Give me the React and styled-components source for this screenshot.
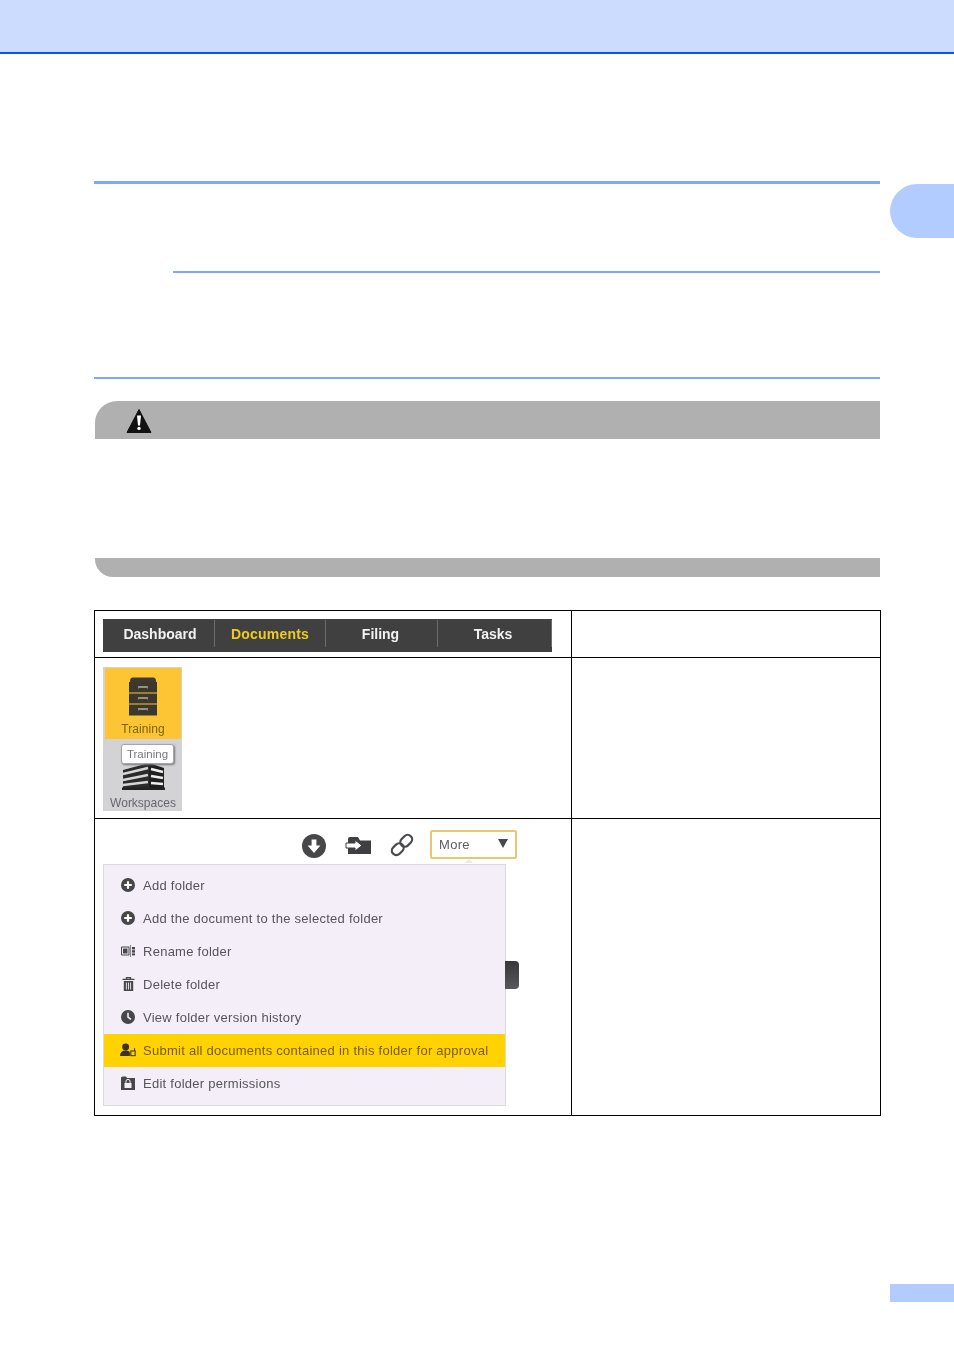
import React from "react";
import styled, { createGlobalStyle } from "styled-components";

const GlobalStyle = createGlobalStyle`
  html, body {
    margin: 0;
    padding: 0;
    background: #fff;
  }
`;

const Page = styled.div`
  width: 954px;
  height: 1348px;
  overflow: hidden;
`;

const TopBand = styled.header`
  height: 52px;
  background: #ccdcff;
  border-bottom: 2px solid #0a50f5;
`;

const Sheet = styled.div`
  display: grid;
  grid-template-columns: 787px 64px;
  column-gap: 9px;
  padding-left: 94px;
`;

const Main = styled.main`
  padding-top: 127px;
`;

const Aside = styled.aside`
  display: flex;
  flex-direction: column;
`;

const ChapterTab = styled.div`
  margin-top: 130px;
  height: 54px;
  background: #b3ccff;
  border-radius: 27px 0 0 27px;
`;

const PageTab = styled.div`
  margin-top: 1046px;
  height: 18px;
  background: #b3ccff;
`;

const Rule = styled.div`
  height: ${(p) => p.$weight}px;
  margin-top: ${(p) => p.$top}px;
  margin-left: ${(p) => p.$indent || 0}px;
  margin-right: 1px;
  background: #80a6f5;
`;

const WarningHead = styled.div`
  display: flex;
  align-items: center;
  box-sizing: border-box;
  height: 38px;
  margin: 22px 1px 0;
  padding: 2px 0 0 31px;
  background: #b0b0b0;
  border-top-left-radius: 22px;
`;

const WarningBody = styled.div`
  height: 119px;
`;

const WarningFoot = styled.div`
  height: 19px;
  margin: 0 1px;
  background: #b0b0b0;
  border-bottom-left-radius: 18px;
`;

const Table = styled.div`
  display: grid;
  grid-template-columns: 477px 1fr;
  grid-template-rows: 47px 161px 297px;
  margin-top: 33px;
  border-top: 1px solid #000;
  border-left: 1px solid #000;
  font-family: "Liberation Sans", sans-serif;
`;

const Cell = styled.div`
  position: relative;
  box-sizing: border-box;
  border-right: 1px solid #000;
  border-bottom: 1px solid #000;
  padding: ${(p) => p.$pad || "0"};
`;

const Nav = styled.nav`
  display: flex;
  width: 449px;
  height: 33px;
  background: #404040;
  filter: blur(0.3px);
`;

const NavItem = styled.div`
  display: flex;
  align-items: center;
  justify-content: center;
  box-sizing: border-box;
  width: ${(p) => p.$width}px;
  height: 27px;
  margin-top: 1px;
  padding: ${(p) => p.$pad || "0"};
  border-right: 1px solid #6c6c6c;
  font-size: 14px;
  font-weight: 700;
  letter-spacing: ${(p) => (p.$active ? "0.2px" : "0")};
  color: ${(p) => (p.$active ? "#f0cb1f" : "#f2f2f2")};
`;

const Tiles = styled.div`
  position: relative;
  box-sizing: border-box;
  width: 79px;
  height: 144px;
  padding: 1px 1px 0 2px;
  background: #d3d3d6;
  filter: blur(0.35px);
`;

const ActiveTile = styled.div`
  display: flex;
  flex-direction: column;
  align-items: center;
  height: 71px;
  padding-top: 9px;
  box-sizing: border-box;
  background: #fdc433;
`;

const PlainTile = styled.div`
  display: flex;
  flex-direction: column;
  align-items: center;
  padding-top: 23px;
`;

const TileLabel = styled.div`
  font-size: 12px;
  line-height: 14px;
  margin-top: 6px;
  color: ${(p) => p.$color};
  letter-spacing: ${(p) => p.$spacing}px;
`;

const Tooltip = styled.div`
  position: absolute;
  left: 18px;
  top: 77px;
  width: 53px;
  height: 20px;
  box-sizing: border-box;
  background: #fff;
  border: 1px solid #a5a5ad;
  border-radius: 3px;
  box-shadow: 1px 1px 2px #777;
  font-size: 11.5px;
  line-height: 18px;
  text-align: center;
  color: #77777d;
`;

const Toolbar = styled.div`
  display: flex;
  align-items: center;
  justify-content: flex-end;
  width: 414px;
  height: 29px;
  margin-bottom: 5px;
  filter: blur(0.3px);
`;

const ToolIcon = styled.div`
  display: flex;
  margin-top: ${(p) => p.$drop || 0}px;
  margin-right: ${(p) => p.$gap}px;
`;

const MoreButton = styled.div`
  position: relative;
  display: flex;
  align-items: center;
  justify-content: space-between;
  box-sizing: border-box;
  width: 87px;
  height: 29px;
  padding: 0 7px 0 7px;
  background: #fff;
  border: 2px solid #e8c76f;
  border-radius: 2px;
  font-size: 13px;
  letter-spacing: 0.3px;
  color: #5c5c66;

  &::after {
    content: "";
    position: absolute;
    left: 33px;
    bottom: -6px;
    border-left: 4px solid transparent;
    border-right: 4px solid transparent;
    border-bottom: 4px solid #ece6f0;
  }
`;

const Caret = styled.span`
  width: 0;
  height: 0;
  border-left: 5.5px solid transparent;
  border-right: 5.5px solid transparent;
  border-top: 9px solid #47474d;
  margin-top: -3px;
`;

const Menu = styled.div`
  box-sizing: border-box;
  width: 403px;
  height: 242px;
  padding-top: 4px;
  background: #f4eef8;
  border: 1px solid #dcdade;
  filter: blur(0.3px);
`;

const MenuItem = styled.div`
  display: flex;
  align-items: center;
  box-sizing: border-box;
  height: 33px;
  padding: 0 0 1px 16px;
  background: ${(p) => (p.$active ? "#ffd200" : "transparent")};
  color: ${(p) => (p.$active ? "#7b5c00" : "#555559")};
  font-size: 13px;
  letter-spacing: 0.26px;
  white-space: nowrap;
`;

const MenuIcon = styled.span`
  display: flex;
  justify-content: center;
  width: 16px;
  margin-right: 7px;
`;

const EdgeHandle = styled.div`
  position: absolute;
  left: 410px;
  top: 142px;
  width: 14px;
  height: 28px;
  background: linear-gradient(#38383b, #58585c);
  border-radius: 0 4px 4px 0;
`;

const WarningIcon = () => (
  <svg width="26" height="24" viewBox="0 0 26 24">
    <path d="M13 0.5 L25 23.5 L1 23.5 Z" fill="#111" stroke="#111" strokeLinejoin="round" />
    <path d="M11 6.5 h4 l-1 10 h-2 Z" fill="#fff" />
    <circle cx="13" cy="19.4" r="1.7" fill="#fff" />
  </svg>
);

const CabinetIcon = () => (
  <svg width="30" height="39" viewBox="0 0 30 39">
    <path d="M2 4 Q2 0.5 5 0.5 H25 Q28 0.5 28 4 V5 H2 Z" fill="#3d3a33" />
    <rect x="1" y="5" width="28" height="10.5" fill="#3a382f" />
    <rect x="1" y="16.5" width="28" height="10" fill="#3a382f" />
    <rect x="1" y="27.5" width="28" height="11" fill="#3a382f" />
    <path d="M10 10 h10 M10 21 h10 M10 32 h10" stroke="#bcae8c" strokeWidth="1.6" />
    <path d="M10.5 10 v1.6 M19.5 10 v1.6 M10.5 21 v1.6 M19.5 21 v1.6 M10.5 32 v1.6 M19.5 32 v1.6" stroke="#8f8468" />
  </svg>
);

const BuildingIcon = () => (
  <svg width="43" height="28" viewBox="0 0 43 28">
    <path d="M1 8 L27 1 V27 H1 Z" fill="#2b2b2b" />
    <path d="M27 1 L42 6 V27 H27 Z" fill="#1f1f1f" />
    <path d="M1 12 L26 6 M1 18 L26 13 M1 23 L26 20" stroke="#d6d6d6" strokeWidth="2.4" />
    <path d="M29 7 L41 10 M29 14 L41 16 M29 21 L41 22" stroke="#eee" strokeWidth="2.6" />
    <rect x="0" y="25.5" width="43" height="2.5" fill="#222" />
  </svg>
);

const DownloadIcon = () => (
  <svg width="24" height="24" viewBox="0 0 24 24">
    <circle cx="12" cy="12" r="12" fill="#47474a" />
    <path d="M9.6 5.5 h4.8 v6 h4 L12 19 5.6 11.5 h4 Z" fill="#fff" />
  </svg>
);

const MoveFolderIcon = () => (
  <svg width="27" height="19" viewBox="0 0 27 19">
    <path d="M3 3 Q3 1 5 1 H13 L15 4.5 H26 V18 H3 Z" fill="#3f3f42" />
    <path d="M1 7 H10 V4 L17 9.5 10 15 V12 H1 Z" fill="#fff" stroke="#3f3f42" strokeWidth="1" />
  </svg>
);

const ChainIcon = () => (
  <svg width="24" height="24" viewBox="0 0 24 24">
    <g transform="rotate(-45 12 12)" fill="none" stroke="#4a4a4e" strokeWidth="2.2">
      <rect x="-0.5" y="7.5" width="13" height="9" rx="4.5" />
      <rect x="11.5" y="7.5" width="13" height="9" rx="4.5" />
    </g>
  </svg>
);

const PlusCircle = () => (
  <svg width="14" height="14" viewBox="0 0 14 14">
    <circle cx="7" cy="7" r="7" fill="#47474a" />
    <path d="M3.2 7 H10.8 M7 3.2 V10.8" stroke="#fff" strokeWidth="2.2" />
  </svg>
);

const RenameIcon = () => (
  <svg width="14" height="12" viewBox="0 0 14 12">
    <path d="M0.5 2 H8 V10 H0.5 Z" fill="none" stroke="#47474a" />
    <rect x="2" y="3.5" width="4.5" height="5" fill="#47474a" />
    <path d="M9.5 0 V12" stroke="#8a8a8e" strokeWidth="1.2" />
    <rect x="11" y="2" width="3" height="2.4" fill="#47474a" />
    <rect x="11" y="5.2" width="3" height="2.4" fill="#47474a" />
    <rect x="11" y="8.4" width="3" height="2" fill="#47474a" />
  </svg>
);

const TrashIcon = () => (
  <svg width="13" height="14" viewBox="0 0 13 14">
    <path d="M0.5 2.4 H12.5 M4.5 2 V0.6 H8.5 V2" fill="none" stroke="#47474a" strokeWidth="1.3" />
    <path d="M1.8 4 H11.2 V14 H1.8 Z" fill="#47474a" />
    <path d="M4.4 5.5 V12.5 M6.5 5.5 V12.5 M8.6 5.5 V12.5" stroke="#f4eef8" strokeWidth="0.9" />
  </svg>
);

const ClockIcon = () => (
  <svg width="14" height="14" viewBox="0 0 14 14">
    <circle cx="7" cy="7" r="7" fill="#47474a" />
    <path d="M7 2.8 V7.2 L10 9.4" fill="none" stroke="#f4eef8" strokeWidth="1.6" />
  </svg>
);

const ApprovalIcon = () => (
  <svg width="17" height="14" viewBox="0 0 17 14">
    <circle cx="6" cy="3.7" r="3.7" fill="#3a3326" />
    <path d="M0 13.5 Q0 7.5 6 7.5 Q10 7.5 10.5 10 V13.5 Z" fill="#3a3326" />
    <rect x="11.5" y="8" width="4.6" height="5" fill="none" stroke="#3a3326" strokeWidth="1.1" />
    <path d="M15.5 5 V8" stroke="#3a3326" />
  </svg>
);

const LockFolderIcon = () => (
  <svg width="14" height="14" viewBox="0 0 14 14">
    <path d="M0 2 Q0 0.5 1.5 0.5 H5 L6 2 H14 V14 H0 Z" fill="#47474a" />
    <rect x="3.5" y="7" width="7" height="5" fill="#f4eef8" />
    <path d="M5 7 V5.2 Q5 3.4 7 3.4 Q9 3.4 9 5.2 V7" fill="none" stroke="#f4eef8" />
  </svg>
);

const navItems = [
  { label: "Dashboard", width: 112, pad: "0 0 0 3px" },
  { label: "Documents", width: 111 },
  { label: "Filing", width: 112, pad: "0 2px 0 0" },
  { label: "Tasks", width: 114, pad: "0 3px 0 0" },
];

const menuItems = [
  { label: "Add folder", icon: <PlusCircle /> },
  { label: "Add the document to the selected folder", icon: <PlusCircle /> },
  { label: "Rename folder", icon: <RenameIcon /> },
  { label: "Delete folder", icon: <TrashIcon /> },
  { label: "View folder version history", icon: <ClockIcon /> },
  {
    label: "Submit all documents contained in this folder for approval",
    icon: <ApprovalIcon />,
    active: true,
  },
  { label: "Edit folder permissions", icon: <LockFolderIcon /> },
];

const App = () => (
  <Page>
    <GlobalStyle />
    <TopBand />
    <Sheet>
      <Main>
        <Rule $weight={3} $top={0} />
        <Rule $weight={2} $top={87} $indent={79} />
        <Rule $weight={2} $top={104} />
        <WarningHead>
          <WarningIcon />
        </WarningHead>
        <WarningBody />
        <WarningFoot />
        <Table>
          <Cell $pad="8px">
            <Nav>
              {navItems.map((item) => (
                <NavItem
                  key={item.label}
                  $width={item.width}
                  $pad={item.pad}
                  $active={item.label === "Documents"}
                >
                  {item.label}
                </NavItem>
              ))}
            </Nav>
          </Cell>
          <Cell />
          <Cell $pad="9px 8px">
            <Tiles>
              <ActiveTile>
                <CabinetIcon />
                <TileLabel $spacing={0.05} $color="#7d6400">Training</TileLabel>
              </ActiveTile>
              <PlainTile>
                <BuildingIcon />
                <TileLabel $spacing={0} $color="#66666c">Workspaces</TileLabel>
              </PlainTile>
              <Tooltip>Training</Tooltip>
            </Tiles>
          </Cell>
          <Cell />
          <Cell $pad="11px 8px">
            <Toolbar>
              <ToolIcon $gap={19} $drop={3}><DownloadIcon /></ToolIcon>
              <ToolIcon $gap={18} $drop={1}><MoveFolderIcon /></ToolIcon>
              <ToolIcon $gap={16} $drop={1}><ChainIcon /></ToolIcon>
              <MoreButton>
                More
                <Caret />
              </MoreButton>
            </Toolbar>
            <Menu>
              {menuItems.map((item) => (
                <MenuItem key={item.label} $active={item.active}>
                  <MenuIcon>{item.icon}</MenuIcon>
                  {item.label}
                </MenuItem>
              ))}
            </Menu>
            <EdgeHandle />
          </Cell>
          <Cell />
        </Table>
      </Main>
      <Aside>
        <ChapterTab />
        <PageTab />
      </Aside>
    </Sheet>
  </Page>
);

export default App;
